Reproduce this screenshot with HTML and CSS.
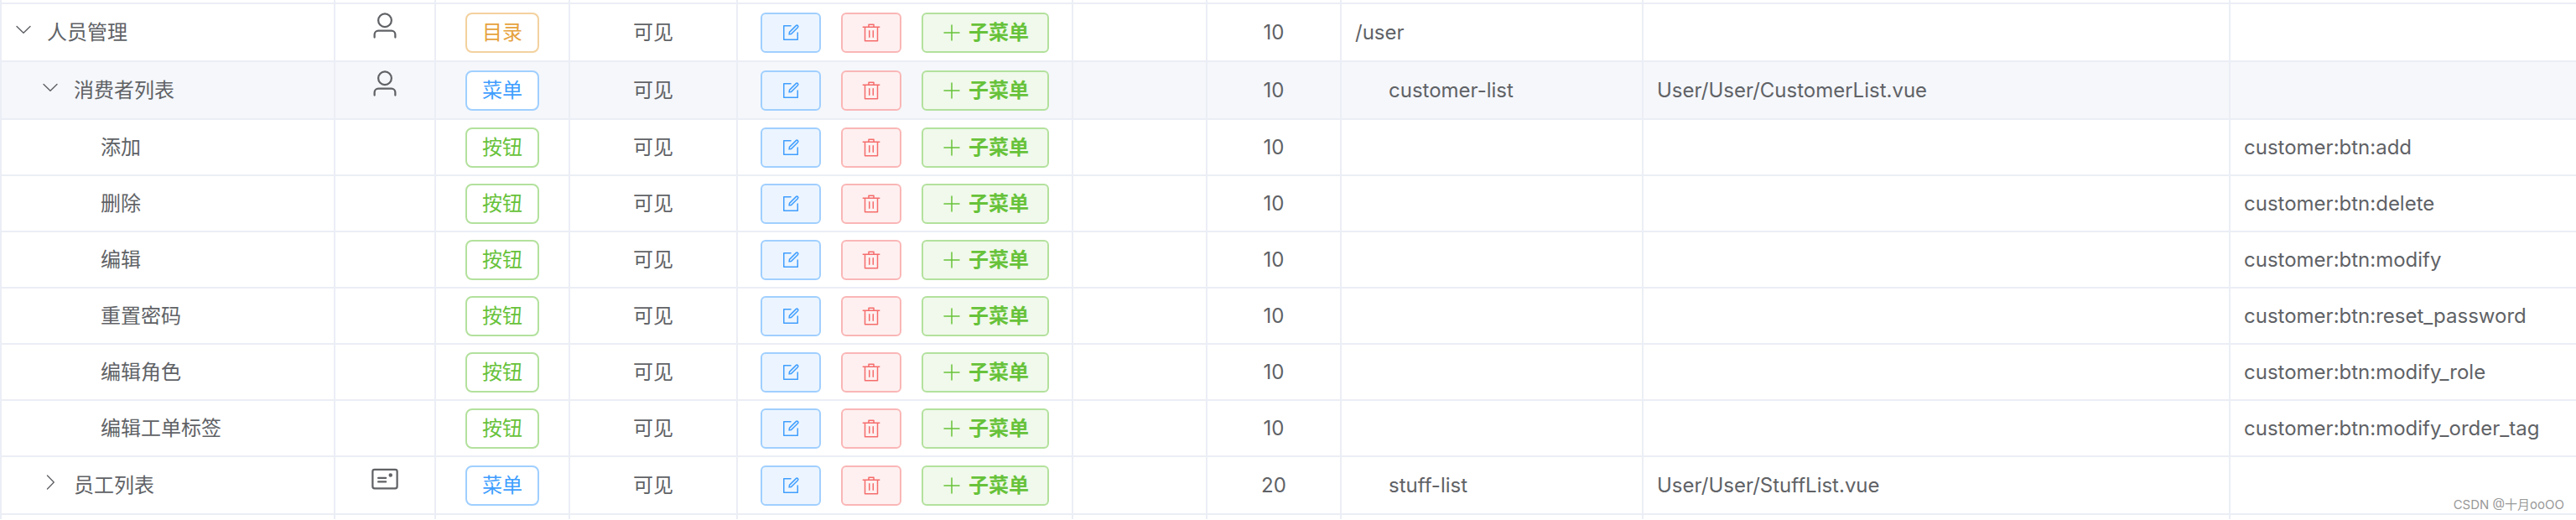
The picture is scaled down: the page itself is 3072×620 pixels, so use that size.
FILE: index.html
```html
<!DOCTYPE html>
<html lang="zh-CN">
<head>
    <meta charset="UTF-8">
    <meta name="viewport" content="width=device-width, initial-scale=1.0">
    <title>菜单管理</title>
    <link rel="stylesheet" href="styles.css">
</head>
<body>
    <svg class="sprite" aria-hidden="true">
        <symbol id="icon-arrow" viewBox="0 0 1024 1024"><path d="M340.864 149.312a30.592 30.592 0 0 0 0 42.752L652.736 512 340.864 831.872a30.592 30.592 0 0 0 0 42.752 29.12 29.12 0 0 0 41.728 0L714.24 534.336a32 32 0 0 0 0-44.672L382.592 149.376a29.12 29.12 0 0 0-41.728 0z"/></symbol>
        <symbol id="icon-user" viewBox="0 0 1024 1024"><path d="M512 512a192 192 0 1 0 0-384 192 192 0 0 0 0 384zm0 64a256 256 0 1 1 0-512 256 256 0 0 1 0 512zm320 320v-96a96 96 0 0 0-96-96H288a96 96 0 0 0-96 96v96a32 32 0 1 1-64 0v-96a160 160 0 0 1 160-160h448a160 160 0 0 1 160 160v96a32 32 0 1 1-64 0z"/></symbol>
        <symbol id="icon-postcard" viewBox="0 0 1024 1024"><path d="M160 224a32 32 0 0 0-32 32v512a32 32 0 0 0 32 32h704a32 32 0 0 0 32-32V256a32 32 0 0 0-32-32H160zm0-64h704a96 96 0 0 1 96 96v512a96 96 0 0 1-96 96H160a96 96 0 0 1-96-96V256a96 96 0 0 1 96-96z"/><path d="M704 320a64 64 0 1 1 0 128 64 64 0 0 1 0-128zM288 448h256q32 0 32 32t-32 32H288q-32 0-32-32t32-32zm0 128h256q32 0 32 32t-32 32H288q-32 0-32-32t32-32z"/></symbol>
        <symbol id="icon-edit" viewBox="0 0 1024 1024"><path d="M832 512a32 32 0 1 1 64 0v352a32 32 0 0 1-32 32H160a32 32 0 0 1-32-32V160a32 32 0 0 1 32-32h352a32 32 0 0 1 0 64H192v640h640V512z"/><path d="m469.952 554.24 52.8-7.552L847.104 222.4a32 32 0 1 0-45.248-45.248L477.44 501.44l-7.552 52.8zm422.4-422.4a96 96 0 0 1 0 135.808l-331.84 331.84a32 32 0 0 1-18.112 9.088L436.8 623.68a32 32 0 0 1-36.224-36.224l15.104-105.6a32 32 0 0 1 9.024-18.112l331.904-331.84a96 96 0 0 1 135.744 0z"/></symbol>
        <symbol id="icon-delete" viewBox="0 0 1024 1024"><path d="M160 256H96a32 32 0 0 1 0-64h256V95.936a32 32 0 0 1 32-32h256a32 32 0 0 1 32 32V192h256a32 32 0 1 1 0 64h-64v672a32 32 0 0 1-32 32H192a32 32 0 0 1-32-32V256zm448-64v-64H416v64h192zM224 896h576V256H224v640zm192-128a32 32 0 0 1-32-32V416a32 32 0 0 1 64 0v320a32 32 0 0 1-32 32zm192 0a32 32 0 0 1-32-32V416a32 32 0 0 1 64 0v320a32 32 0 0 1-32 32z"/></symbol>
        <symbol id="icon-plus" viewBox="0 0 1024 1024"><path d="M480 480V128a32 32 0 0 1 64 0v352h352a32 32 0 1 1 0 64H544v352a32 32 0 1 1-64 0V544H128a32 32 0 0 1 0-64h352z"/></symbol>
    </svg>

    <table class="menu-table">
        <colgroup>
            <col class="col-name">
            <col class="col-icon">
            <col class="col-type">
            <col class="col-visible">
            <col class="col-action">
            <col class="col-blank">
            <col class="col-sort">
            <col class="col-path">
            <col class="col-component">
            <col class="col-permission">
        </colgroup>
        <tbody id="menuRows"></tbody>
    </table>

    <div class="watermark">CSDN @十月ooOO</div>

    <script src="menu.js"></script>
</body>
</html>
```
FILE: styles.css
```css
body {
    margin: 0;
    background-color: #ffffff;
    color: #606266;
    font-family: Inter, "Noto Sans CJK SC", sans-serif;
    font-size: 24px;
    line-height: 36px;
}
.sprite {
    display: none;
}
.icon {
    display: block;
    width: 24px;
    height: 24px;
    fill: currentColor;
}
.menu-table {
    width: 100%;
    table-layout: fixed;
    border-collapse: separate;
    border-spacing: 0;
    border-left: 2px solid #ebeef5;
}
.col-name {
    width: 398px;
}
.col-icon {
    width: 120px;
}
.col-type,
.col-blank,
.col-sort {
    width: 160px;
}
.col-visible {
    width: 200px;
}
.col-action {
    width: 400px;
}
.col-path {
    width: 360px;
}
.col-component {
    width: 700px;
}
.menu-table td {
    box-sizing: border-box;
    height: 67px;
    padding: 0 16px;
    border-right: 2px solid #ebeef5;
    border-bottom: 2px solid #ebeef5;
    white-space: nowrap;
}
.menu-table td:last-child {
    border-right: none;
}
.menu-table .tall td {
    height: 69px;
}
.menu-table .edge td {
    height: 5px;
}
.menu-table .edge:last-child td {
    border-bottom: none;
}
.menu-table .current td {
    background-color: #f5f7fb;
}
.menu-table .center {
    text-align: center;
}
.menu-table .icon-cell {
    padding-top: 8px;
    vertical-align: top;
}
.icon-cell .icon {
    width: 36px;
    height: 36px;
    margin: 0 auto;
}
.tree {
    display: flex;
    align-items: center;
    gap: 16px;
}
.menu-table td:first-child {
    padding-left: 14px;
}
.level-1 {
    padding-left: 32px;
}
.level-2 {
    padding-left: 104px;
}
.expand {
    padding: 0 0 8px;
    border: none;
    background: none;
    color: inherit;
    cursor: pointer;
}
.expand.open .icon {
    transform: rotate(90deg);
}
.indent {
    padding-left: 40px;
}
.tag {
    display: inline-block;
    box-sizing: border-box;
    height: 48px;
    padding: 0 18px;
    border: 2px solid;
    border-radius: 8px;
    background-color: #ffffff;
    line-height: 44px;
    vertical-align: middle;
}
.tag.warning {
    color: #e6a23c;
    border-color: #f3d19e;
}
.tag.primary {
    color: #409eff;
    border-color: #a0cfff;
}
.tag.success {
    color: #67c23a;
    border-color: #b3e19d;
}
.actions {
    display: flex;
    justify-content: center;
    gap: 24px;
}
.btn {
    display: flex;
    align-items: center;
    gap: 8px;
    height: 48px;
    padding: 0 22px;
    border: 2px solid;
    border-radius: 6px;
    font-family: inherit;
    font-size: 24px;
    font-weight: 600;
    line-height: 36px;
    cursor: pointer;
}
.btn.primary {
    color: #409eff;
    background-color: #ecf5ff;
    border-color: #a0cfff;
}
.btn.danger {
    color: #f56c6c;
    background-color: #fef0f0;
    border-color: #fab6b6;
}
.btn.success {
    color: #67c23a;
    background-color: #f0f9eb;
    border-color: #b3e19d;
}
.watermark {
    position: absolute;
    right: 14px;
    bottom: 6px;
    color: #999999;
    font-size: 15px;
    line-height: 24px;
}
```
FILE: menu.js
```js
const menus = [
    { name: "人员管理", level: 0, open: true, icon: "user", type: "目录", sort: 10, path: "/user" },
    { name: "消费者列表", level: 1, open: true, current: true, icon: "user", type: "菜单", sort: 10, path: "customer-list", component: "User/User/CustomerList.vue" },
    { name: "添加", level: 2, type: "按钮", sort: 10, permission: "customer:btn:add" },
    { name: "删除", level: 2, type: "按钮", sort: 10, permission: "customer:btn:delete" },
    { name: "编辑", level: 2, type: "按钮", sort: 10, permission: "customer:btn:modify" },
    { name: "重置密码", level: 2, type: "按钮", sort: 10, permission: "customer:btn:reset_password" },
    { name: "编辑角色", level: 2, type: "按钮", sort: 10, permission: "customer:btn:modify_role" },
    { name: "编辑工单标签", level: 2, type: "按钮", sort: 10, permission: "customer:btn:modify_order_tag" },
    { name: "员工列表", level: 1, open: false, icon: "postcard", type: "菜单", sort: 20, path: "stuff-list", component: "User/User/StuffList.vue" }
];

const tagColors = { "目录": "warning", "菜单": "primary", "按钮": "success" };

function icon(name) {
    return `<svg class="icon" aria-hidden="true"><use href="#icon-${name}"/></svg>`;
}

function renderRow(menu) {
    const expand = menu.open === undefined ? "" :
        `<button class="expand ${menu.open ? "open" : ""}" aria-expanded="${menu.open}" aria-label="${menu.name}">${icon("arrow")}</button>`;
    return `
        <tr class="${menu.icon ? "tall" : ""} ${menu.current ? "current" : ""}">
            <td><div class="tree level-${menu.level}">${expand}<span>${menu.name}</span></div></td>
            <td class="icon-cell">${menu.icon ? icon(menu.icon) : ""}</td>
            <td class="center"><span class="tag ${tagColors[menu.type]}">${menu.type}</span></td>
            <td class="center">可见</td>
            <td>
                <div class="actions">
                    <button class="btn primary" aria-label="编辑">${icon("edit")}</button>
                    <button class="btn danger" aria-label="删除">${icon("delete")}</button>
                    <button class="btn success">${icon("plus")}<span>子菜单</span></button>
                </div>
            </td>
            <td></td>
            <td class="center">${menu.sort}</td>
            <td><span class="${menu.level > 0 ? "indent" : ""}">${menu.path || ""}</span></td>
            <td>${menu.component || ""}</td>
            <td>${menu.permission || ""}</td>
        </tr>
    `;
}

// slivers of the rows scrolled out above and below
const edgeRow = `<tr class="edge" aria-hidden="true">${"<td></td>".repeat(10)}</tr>`;

document.getElementById("menuRows").innerHTML = edgeRow + menus.map(renderRow).join("") + edgeRow;
```
